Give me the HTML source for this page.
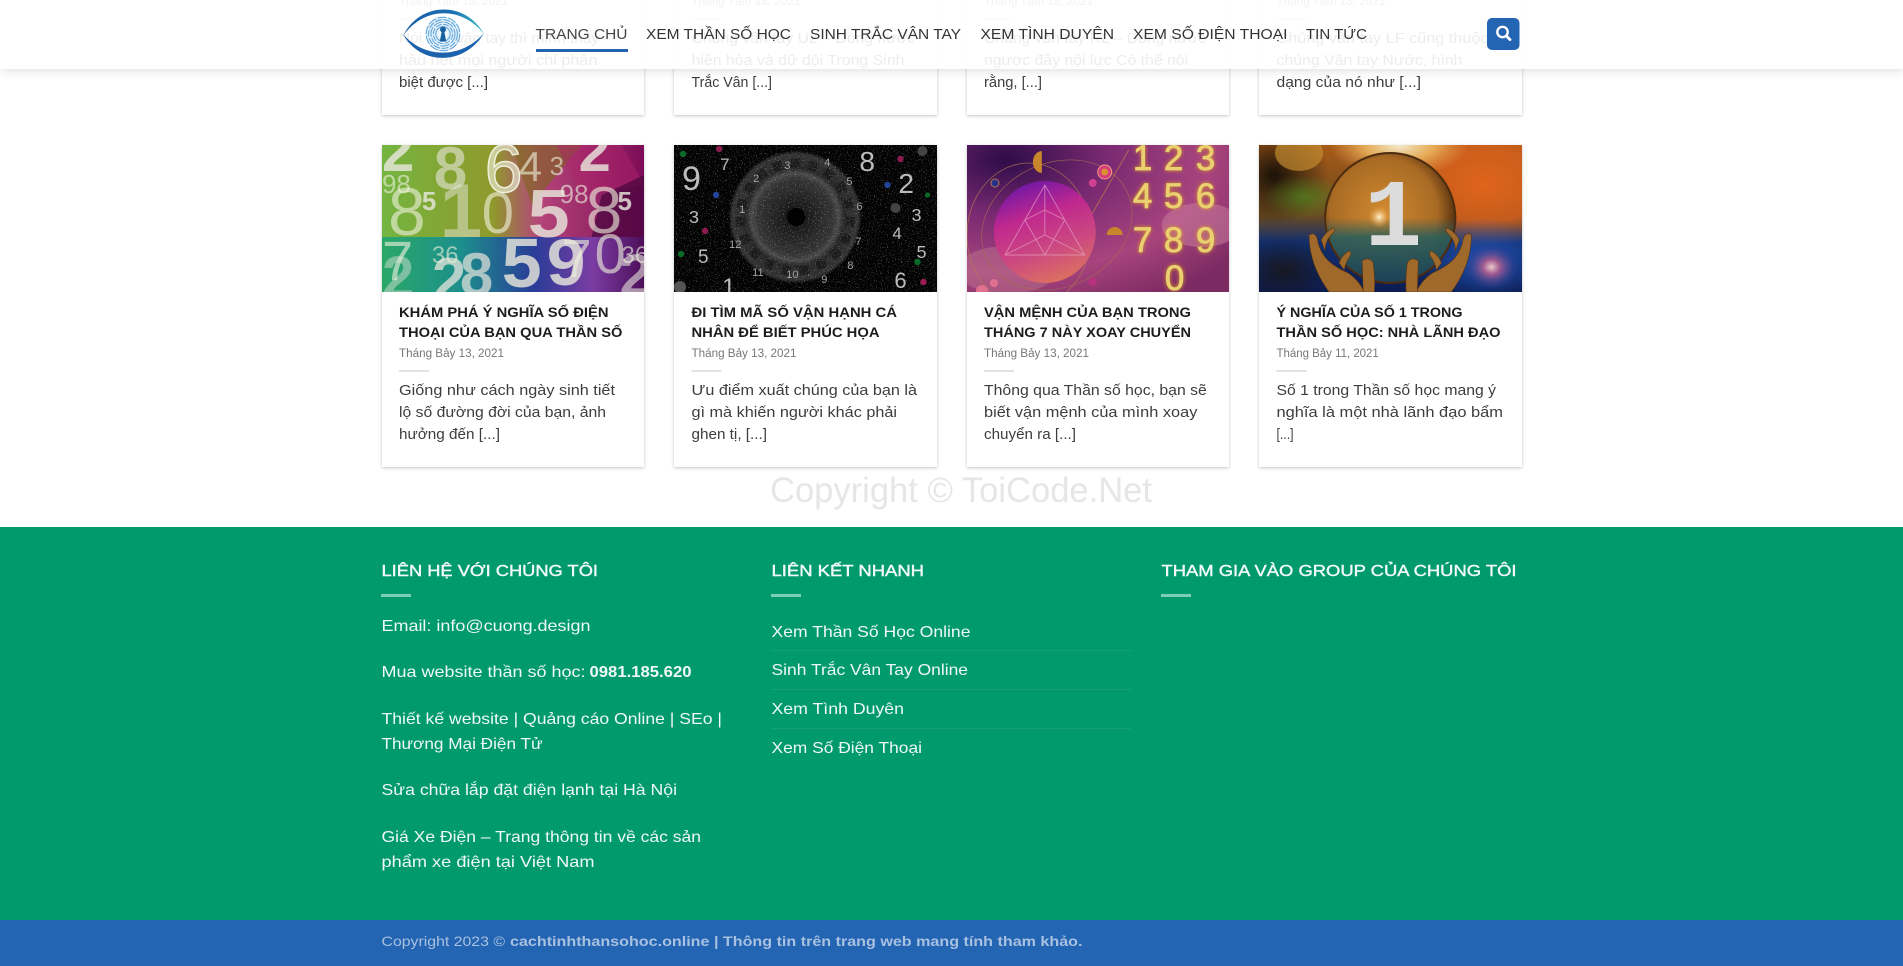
<!DOCTYPE html>
<html lang="vi">
<head>
<meta charset="utf-8">
<title>Cách tính thần số học</title>
<style>
html,body{margin:0;padding:0;background:#fff}
body{width:1903px;height:966px;overflow:hidden;position:relative;font-family:"Liberation Sans","DejaVu Sans",sans-serif}
svg{display:block}
svg text{font-family:"Liberation Sans","DejaVu Sans",sans-serif}
.layer{position:absolute;left:0;top:0}
.card{position:absolute;background:#fff;box-shadow:0 1px 3px rgba(0,0,0,.24)}
.green{position:absolute;left:0;top:527px;width:1903px;height:393px;background:#009a6e}
.blue{position:absolute;left:0;top:920px;width:1903px;height:46px;background:#2364b3}
.hdr{position:absolute;left:0;top:0;width:1903px;height:69px;background:rgba(255,255,255,.9);box-shadow:1px 1px 10px rgba(0,0,0,.15)}
.t{font-size:13.5px;font-weight:700;fill:#1c1c1c}
.d{font-size:11.5px;fill:#777}
.p{font-size:15px;fill:#3d3d3d}
.n{font-size:14.6px;fill:#333}
.ft{font-size:16px;fill:#f2faf7;stroke:#f2faf7;stroke-width:.4px}
.f{font-size:15.6px;fill:#eef8f5}
.c{font-size:14px;fill:#a9c1e0}
.wm{font-size:35px;fill:#e6e6e6}
</style>
</head>
<body>
<div class="card" style="left:382px;width:262px;top:-60px;height:175px"></div>
<div class="card" style="left:674px;width:263px;top:-60px;height:175px"></div>
<div class="card" style="left:967px;width:262px;top:-60px;height:175px"></div>
<div class="card" style="left:1259px;width:263px;top:-60px;height:175px"></div>
<div class="card" style="left:382px;width:262px;top:145px;height:322px"></div>
<div class="card" style="left:674px;width:263px;top:145px;height:322px"></div>
<div class="card" style="left:967px;width:262px;top:145px;height:322px"></div>
<div class="card" style="left:1259px;width:263px;top:145px;height:322px"></div>
<div class="green"></div>
<div class="blue"></div>

<svg class="layer" width="1903" height="966" viewBox="0 0 1903 966">
<defs>
<linearGradient id="a1" x1="0" x2="1" y1="0" y2="0"><stop offset="0" stop-color="#74b540"/><stop offset=".42" stop-color="#8f9a2c"/><stop offset=".6" stop-color="#b4447a"/><stop offset="1" stop-color="#7d0c56"/></linearGradient>
<linearGradient id="a2" x1="0" x2="1" y1="0" y2="0"><stop offset="0" stop-color="#2aa868"/><stop offset=".3" stop-color="#1c8f8c"/><stop offset=".58" stop-color="#2a3c98"/><stop offset=".8" stop-color="#7b3da3"/><stop offset="1" stop-color="#4c0e58"/></linearGradient>
<radialGradient id="c1"><stop offset="0" stop-color="#050505"/><stop offset=".2" stop-color="#1c1c1c"/><stop offset=".58" stop-color="#343434"/><stop offset=".66" stop-color="#4a4a4a"/><stop offset=".74" stop-color="#262626"/><stop offset=".95" stop-color="#333"/><stop offset="1" stop-color="#0a0a0a"/></radialGradient>
<radialGradient id="b3" cx=".15" cy=".1" r="1.1"><stop offset="0" stop-color="#2e0c48"/><stop offset=".35" stop-color="#7a2a72"/><stop offset=".7" stop-color="#a8447e"/><stop offset="1" stop-color="#7c2a62"/></radialGradient>
<linearGradient id="o3" x1=".25" x2=".6" y1="0" y2="1"><stop offset="0" stop-color="#6a16a8"/><stop offset=".35" stop-color="#c0288e"/><stop offset=".7" stop-color="#cc4a80"/><stop offset="1" stop-color="#dc7060"/></linearGradient>
<linearGradient id="b4" x1="0" x2="0" y1="0" y2="1"><stop offset="0" stop-color="#a85a18"/><stop offset=".48" stop-color="#6a4a20"/><stop offset=".66" stop-color="#123070"/><stop offset="1" stop-color="#0c1c50"/></linearGradient>
<radialGradient id="g4a"><stop offset="0" stop-color="#f4ecd0"/><stop offset=".5" stop-color="#eeb860" stop-opacity=".85"/><stop offset="1" stop-color="#e8a050" stop-opacity="0"/></radialGradient>
<radialGradient id="g4b"><stop offset="0" stop-color="#e0641c"/><stop offset=".6" stop-color="#d4601c" stop-opacity=".85"/><stop offset="1" stop-color="#d8601c" stop-opacity="0"/></radialGradient>
<radialGradient id="g4c"><stop offset="0" stop-color="#4f8a20" stop-opacity=".7"/><stop offset="1" stop-color="#4f8a20" stop-opacity="0"/></radialGradient>
<radialGradient id="g4d"><stop offset="0" stop-color="#ecc8c8"/><stop offset=".3" stop-color="#a05a90"/><stop offset="1" stop-color="#1c3a90" stop-opacity="0"/></radialGradient>
<radialGradient id="g4e"><stop offset="0" stop-color="#1a1208"/><stop offset="1" stop-color="#1a1208" stop-opacity="0"/></radialGradient>
<radialGradient id="g4f"><stop offset="0" stop-color="#1f4fb0"/><stop offset="1" stop-color="#1f4fb0" stop-opacity="0"/></radialGradient>
<radialGradient id="s4" cx=".45" cy=".45" r=".55"><stop offset="0" stop-color="#d08a30"/><stop offset=".75" stop-color="#a86a24"/><stop offset="1" stop-color="#5a3210"/></radialGradient>
<linearGradient id="s4b" x1="0" x2="0" y1="0" y2="1"><stop offset="0" stop-color="#2a5f5c" stop-opacity="0"/><stop offset=".3" stop-color="#2a5f5c" stop-opacity=".9"/><stop offset="1" stop-color="#1c4258"/></linearGradient>
<radialGradient id="st"><stop offset="0" stop-color="#fff4d0"/><stop offset="1" stop-color="#f0a040" stop-opacity="0"/></radialGradient>
<linearGradient id="e1" x1="0" x2="1"><stop offset="0" stop-color="#1b5fa8"/><stop offset=".6" stop-color="#1a6cb0"/><stop offset="1" stop-color="#3fc0c8"/></linearGradient>
<filter id="dust" x="0" y="0" width="1" height="1"><feTurbulence type="fractalNoise" baseFrequency=".85" numOctaves="2" seed="4"/><feColorMatrix values="0 0 0 0 .8 0 0 0 0 .8 0 0 0 0 .8 8 0 0 0 -5"/></filter>
</defs>

<!-- Top row of cards -->
<g>
<text class="d" x="399" y="5" textLength="109" lengthAdjust="spacingAndGlyphs">Tháng Tám 18, 2021</text>
<rect x="399" y="18" width="30" height="2" fill="#e2e2e2"/>
<text class="p" x="399" y="43" textLength="200" lengthAdjust="spacingAndGlyphs">Nói đến vân tay thì mình thấy</text>
<text class="p" x="399" y="65" textLength="198.5" lengthAdjust="spacingAndGlyphs">hầu hết mọi người chỉ phân</text>
<text class="p" x="399" y="87" textLength="89" lengthAdjust="spacingAndGlyphs">biệt được [...]</text>

<text class="d" x="691.5" y="5" textLength="109" lengthAdjust="spacingAndGlyphs">Tháng Tám 18, 2021</text>
<rect x="691.5" y="18" width="30" height="2" fill="#e2e2e2"/>
<text class="p" x="691.5" y="43" textLength="223.5" lengthAdjust="spacingAndGlyphs">Chủng vân tay U2 – Dòng nước</text>
<text class="p" x="691.5" y="65" textLength="213" lengthAdjust="spacingAndGlyphs">hiền hòa và dữ dội Trong Sinh</text>
<text class="p" x="691.5" y="87" textLength="80.5" lengthAdjust="spacingAndGlyphs">Trắc Vân [...]</text>

<text class="d" x="984" y="5" textLength="109" lengthAdjust="spacingAndGlyphs">Tháng Tám 18, 2021</text>
<rect x="984" y="18" width="30" height="2" fill="#e2e2e2"/>
<text class="p" x="984" y="43" textLength="222" lengthAdjust="spacingAndGlyphs">Chủng vân tay RL – Dòng nước</text>
<text class="p" x="984" y="65" textLength="204" lengthAdjust="spacingAndGlyphs">ngược đầy nội lực Có thể nói</text>
<text class="p" x="984" y="87" textLength="58" lengthAdjust="spacingAndGlyphs">rằng, [...]</text>

<text class="d" x="1276.5" y="5" textLength="109" lengthAdjust="spacingAndGlyphs">Tháng Tám 18, 2021</text>
<rect x="1276.5" y="18" width="30" height="2" fill="#e2e2e2"/>
<text class="p" x="1276.5" y="43" textLength="212" lengthAdjust="spacingAndGlyphs">Chủng vân tay LF cũng thuộc</text>
<text class="p" x="1276.5" y="65" textLength="186" lengthAdjust="spacingAndGlyphs">chủng Vân tay Nước, hình</text>
<text class="p" x="1276.5" y="87" textLength="144.5" lengthAdjust="spacingAndGlyphs">dạng của nó như [...]</text>
</g>

<!-- Image 1 -->
<svg x="382" y="145" width="262" height="147" viewBox="0 0 262.5 147" preserveAspectRatio="none">
<rect width="263" height="92" fill="url(#a1)"/>
<rect y="92" width="263" height="55" fill="url(#a2)"/>
<polygon points="130,0 200,0 150,60" fill="#7a6a14" opacity=".55"/>
<polygon points="175,0 240,0 263,40 200,50" fill="#b0246c" opacity=".45"/>
<polygon points="220,50 263,30 263,92 210,92" fill="#3c0438" opacity=".6"/>
<g fill="#e8e6dc" fill-opacity=".82" font-weight="700">
<text x="0" y="26" font-size="58">2</text>
<text x="197" y="26" font-size="58">2</text>
<text x="52" y="44" font-size="60" fill-opacity=".6">8</text>
<text x="146" y="92" font-size="68" textLength="42" lengthAdjust="spacingAndGlyphs">5</text>
<text x="120" y="142" font-size="70" textLength="40" lengthAdjust="spacingAndGlyphs">5</text>
<text x="165" y="140" font-size="66" textLength="39" lengthAdjust="spacingAndGlyphs">9</text>
<text x="40" y="65" font-size="26">5</text>
<text x="236" y="65" font-size="26">5</text>
<text x="50" y="156" font-size="62" fill-opacity=".75">2</text>
<text x="78" y="150" font-size="60" fill-opacity=".7">8</text>
<text x="0" y="152" font-size="58" fill-opacity=".45">2</text>
<text x="238" y="150" font-size="58" fill-opacity=".6">2</text>
<text x="58" y="92" font-size="76" fill-opacity=".5">1</text>
</g>
<g fill="#eef0dc" fill-opacity=".62">
<text x="103" y="47" font-size="68" stroke="#eef0dc" stroke-width="1.5">6</text>
<text x="137" y="36" font-size="42">4</text>
<text x="168" y="30" font-size="26">3</text>
<text x="6" y="90" font-size="68">8</text>
<text x="204" y="88" font-size="66">8</text>
<text x="100" y="88" font-size="58">0</text>
<text x="213" y="128" font-size="56">0</text>
<text x="50" y="118" font-size="24">36</text>
<text x="240" y="118" font-size="24">36</text>
<text x="0" y="135" font-size="56">7</text>
<text x="180" y="132" font-size="54">7</text>
<text x="178" y="58" font-size="26">98</text>
<text x="0" y="48" font-size="26">98</text>
</g>
</svg>

<!-- Image 2 -->
<svg x="674" y="145" width="263" height="147" viewBox="0 0 262.5 147" preserveAspectRatio="none">
<rect width="263" height="147" fill="#030303"/>
<ellipse cx="121" cy="72" rx="66" ry="66" fill="url(#c1)"/>
<ellipse cx="121" cy="72" rx="55" ry="54" fill="none" stroke="#151515" stroke-width="9" stroke-dasharray="9 9" opacity=".7"/>
<rect width="263" height="147" filter="url(#dust)" opacity=".4"/>
<circle cx="122" cy="72" r="9" fill="#020202"/>
<g fill="#a6a6a6" font-size="11">
<text x="110" y="24">3</text><text x="150" y="21">4</text><text x="172" y="40">5</text><text x="182" y="65">6</text><text x="181" y="100">7</text><text x="173" y="124">8</text><text x="147" y="138">9</text><text x="112" y="133">10</text><text x="78" y="131">11</text><text x="55" y="103">12</text><text x="65" y="68">1</text><text x="79" y="37">2</text>
</g>
<g fill="#bcbcbc">
<text x="8" y="45" font-size="34">9</text>
<text x="185" y="26" font-size="28">8</text>
<text x="224" y="48" font-size="28">2</text>
<text x="15" y="78" font-size="18">3</text>
<text x="237" y="76" font-size="18">3</text>
<text x="218" y="94" font-size="17">4</text>
<text x="24" y="118" font-size="19">5</text>
<text x="242" y="113" font-size="18">5</text>
<text x="220" y="143" font-size="22">6</text>
<text x="46" y="25" font-size="17">7</text>
<text x="48" y="150" font-size="24">1</text>
</g>
<g>
<circle cx="9" cy="9" r="3.2" fill="#0a6a28"/><circle cx="45" cy="4" r="3.2" fill="#8a1c50"/><circle cx="226" cy="14" r="3.2" fill="#8a1c50"/><circle cx="213" cy="40" r="3.2" fill="#24449a"/><circle cx="253" cy="50" r="2.6" fill="#0a6a28"/><circle cx="42" cy="50" r="3.2" fill="#24449a"/><circle cx="31" cy="86" r="3.2" fill="#8a1c50"/><circle cx="7" cy="109" r="3.2" fill="#0a6a28"/><circle cx="243" cy="117" r="3.2" fill="#0a6a28"/><circle cx="249" cy="137" r="3.2" fill="#9a1c54"/><circle cx="221" cy="63" r="5" fill="#444"/><circle cx="248" cy="6" r="5" fill="#444"/><circle cx="6" cy="142" r="6" fill="#555"/>
</g>
</svg>

<!-- Image 3 -->
<svg x="967" y="145" width="262" height="147" viewBox="0 0 262.5 147" preserveAspectRatio="none">
<rect width="263" height="147" fill="url(#b3)"/>
<ellipse cx="235" cy="80" rx="40" ry="22" fill="#c87c9c" opacity=".55"/>
<ellipse cx="40" cy="125" rx="50" ry="24" fill="#c08090" opacity=".4"/>
<ellipse cx="62" cy="90" rx="62" ry="72" fill="none" stroke="#b07a50" stroke-width=".8" opacity=".8"/>
<ellipse cx="90" cy="80" rx="78" ry="62" fill="none" stroke="#a86a50" stroke-width=".8" opacity=".8" transform="rotate(-25 90 80)"/>
<line x1="90" y1="130" x2="162" y2="5" stroke="#b87050" stroke-width=".8"/>
<circle cx="78" cy="87" r="51" fill="url(#o3)"/>
<g fill="none" stroke="#e8a8cc" stroke-width=".9" opacity=".65">
<polygon points="78,40 38,110 118,110"/>
<polyline points="78,40 78,90 38,110"/><polyline points="78,90 118,110"/><polyline points="58,75 78,65 98,75 78,110 58,75"/>
</g>
<path d="M75 6a9 11 0 0 0 0 22z" fill="#c8862c"/>
<circle cx="138" cy="27" r="7" fill="#d83a80" stroke="#e8a080"/><circle cx="138" cy="27" r="3.5" fill="#d89030"/>
<circle cx="126" cy="38" r="4" fill="#d04090"/>
<circle cx="28" cy="38" r="4" fill="#28308a" stroke="#b07a50"/>
<path d="M140 90a8 8 0 0 1 16 0z" fill="#c8862c"/>
<circle cx="27" cy="138" r="4" fill="#e07090"/><circle cx="15" cy="146" r="6" fill="#e07090"/>
<circle cx="126" cy="137" r="4" fill="#b83080"/>
<g font-size="35" fill="#ead070" stroke="#ead070" stroke-width=".7" style="filter:drop-shadow(0 0 2px #e0a020)" text-anchor="middle">
<text x="176" y="25">1</text><text x="207" y="25">2</text><text x="239" y="25">3</text>
<text x="176" y="63">4</text><text x="207" y="63">5</text><text x="239" y="63">6</text>
<text x="176" y="107">7</text><text x="207" y="107">8</text><text x="239" y="107">9</text>
<text x="208" y="145">0</text>
</g>
</svg>

<!-- Image 4 -->
<svg x="1259" y="145" width="263" height="147" viewBox="0 0 262.5 147" preserveAspectRatio="none">
<rect width="263" height="147" fill="url(#b4)"/>
<ellipse cx="15" cy="30" rx="55" ry="50" fill="url(#g4e)"/>
<ellipse cx="225" cy="40" rx="95" ry="62" fill="url(#g4b)"/>
<ellipse cx="140" cy="0" rx="70" ry="32" fill="url(#g4a)"/>
<ellipse cx="45" cy="52" rx="40" ry="22" fill="url(#g4c)"/>
<ellipse cx="40" cy="8" rx="24" ry="18" fill="#c08a30" opacity=".7"/>
<ellipse cx="225" cy="115" rx="70" ry="42" fill="url(#g4f)"/>
<ellipse cx="232" cy="122" rx="28" ry="24" fill="url(#g4d)"/>
<ellipse cx="25" cy="125" rx="50" ry="35" fill="url(#g4e)" opacity=".7"/>
<circle cx="131" cy="73" r="65" fill="url(#s4)"/>
<path d="M67 73h128a64 64 0 0 1-128 0z" fill="url(#s4b)"/>
<circle cx="131" cy="73" r="65" fill="none" stroke="#4c2c10" stroke-width="2"/>
<text x="134" y="100" font-size="96" font-weight="700" fill="#dcdcdc" text-anchor="middle" style="font-family:'Liberation Mono',monospace">1</text>
<circle cx="120" cy="72" r="11" fill="url(#st)"/>
<g fill="#a0692c" stroke="#5a3410" stroke-width=".6">
<path d="M50 90c5-3 8 0 9 8 4 14 12 22 30 30 6 4 12 10 16 19H70C56 128 50 108 50 90z"/>
<path d="M212 90c-5-3-8 0-9 8-4 14-12 22-30 30-6 4-12 10-16 19h35c14-19 20-39 20-57z"/>
<path d="M62 95c3-6 8-10 12-12 2 0 2 3 0 5-6 6-8 10-8 18z"/>
<path d="M200 95c-3-6-8-10-12-12-2 0-2 3 0 5 6 6 8 10 8 18z"/>
<path d="M80 118c2-6 6-10 10-12 2 0 2 3 1 5-3 4-5 8-6 14z"/>
<path d="M182 118c-2-6-6-10-10-12-2 0-2 3-1 5 3 4 5 8 6 14z"/>
<path d="M103 116c3-3 9-3 11 2 1 8 2 20 1 29H104z"/>
<path d="M159 116c-3-3-9-3-11 2-1 8-2 20-1 29h11z"/>
</g>
</svg>

<!-- Lower row of cards -->
<g>
<text class="t" x="399" y="317" textLength="209.5" lengthAdjust="spacingAndGlyphs">KHÁM PHÁ Ý NGHĨA SỐ ĐIỆN</text>
<text class="t" x="399" y="337" textLength="223.5" lengthAdjust="spacingAndGlyphs">THOẠI CỦA BẠN QUA THẦN SỐ</text>
<text class="d" x="399" y="357" textLength="105" lengthAdjust="spacingAndGlyphs">Tháng Bảy 13, 2021</text>
<rect x="399" y="370" width="30" height="2" fill="#e2e2e2"/>
<text class="p" x="399" y="395" textLength="216" lengthAdjust="spacingAndGlyphs">Giống như cách ngày sinh tiết</text>
<text class="p" x="399" y="417" textLength="207" lengthAdjust="spacingAndGlyphs">lộ số đường đời của bạn, ảnh</text>
<text class="p" x="399" y="439" textLength="101" lengthAdjust="spacingAndGlyphs">hưởng đến [...]</text>

<text class="t" x="691.5" y="317" textLength="205.5" lengthAdjust="spacingAndGlyphs">ĐI TÌM MÃ SỐ VẬN HẠNH CÁ</text>
<text class="t" x="691.5" y="337" textLength="188" lengthAdjust="spacingAndGlyphs">NHÂN ĐỂ BIẾT PHÚC HỌA</text>
<text class="d" x="691.5" y="357" textLength="105" lengthAdjust="spacingAndGlyphs">Tháng Bảy 13, 2021</text>
<rect x="691.5" y="370" width="30" height="2" fill="#e2e2e2"/>
<text class="p" x="691.5" y="395" textLength="225.5" lengthAdjust="spacingAndGlyphs">Ưu điểm xuất chúng của bạn là</text>
<text class="p" x="691.5" y="417" textLength="205.5" lengthAdjust="spacingAndGlyphs">gì mà khiến người khác phải</text>
<text class="p" x="691.5" y="439" textLength="75.5" lengthAdjust="spacingAndGlyphs">ghen tị, [...]</text>

<text class="t" x="984" y="317" textLength="207" lengthAdjust="spacingAndGlyphs">VẬN MỆNH CỦA BẠN TRONG</text>
<text class="t" x="984" y="337" textLength="207" lengthAdjust="spacingAndGlyphs">THÁNG 7 NÀY XOAY CHUYỂN</text>
<text class="d" x="984" y="357" textLength="105" lengthAdjust="spacingAndGlyphs">Tháng Bảy 13, 2021</text>
<rect x="984" y="370" width="30" height="2" fill="#e2e2e2"/>
<text class="p" x="984" y="395" textLength="222.8" lengthAdjust="spacingAndGlyphs">Thông qua Thần số học, bạn sẽ</text>
<text class="p" x="984" y="417" textLength="213.4" lengthAdjust="spacingAndGlyphs">biết vận mệnh của mình xoay</text>
<text class="p" x="984" y="439" textLength="92" lengthAdjust="spacingAndGlyphs">chuyển ra [...]</text>

<text class="t" x="1276.5" y="317" textLength="186" lengthAdjust="spacingAndGlyphs">Ý NGHĨA CỦA SỐ 1 TRONG</text>
<text class="t" x="1276.5" y="337" textLength="224" lengthAdjust="spacingAndGlyphs">THẦN SỐ HỌC: NHÀ LÃNH ĐẠO</text>
<text class="d" x="1276.5" y="357" textLength="102.3" lengthAdjust="spacingAndGlyphs">Tháng Bảy 11, 2021</text>
<rect x="1276.5" y="370" width="30" height="2" fill="#e2e2e2"/>
<text class="p" x="1276.5" y="395" textLength="219.5" lengthAdjust="spacingAndGlyphs">Số 1 trong Thần số học mang ý</text>
<text class="p" x="1276.5" y="417" textLength="226.5" lengthAdjust="spacingAndGlyphs">nghĩa là một nhà lãnh đạo bẩm</text>
<text class="p" x="1276.5" y="439" textLength="17" lengthAdjust="spacingAndGlyphs">[...]</text>
</g>

<text class="wm" x="770" y="502" textLength="382" lengthAdjust="spacingAndGlyphs">Copyright © ToiCode.Net</text>

<!-- Footer -->
<g>
<text class="ft" x="381.5" y="576" textLength="216.5" lengthAdjust="spacingAndGlyphs">LIÊN HỆ VỚI CHÚNG TÔI</text>
<text class="ft" x="771.5" y="576" textLength="152.5" lengthAdjust="spacingAndGlyphs">LIÊN KẾT NHANH</text>
<text class="ft" x="1161.5" y="576" textLength="355" lengthAdjust="spacingAndGlyphs">THAM GIA VÀO GROUP CỦA CHÚNG TÔI</text>
<rect x="381" y="594" width="30" height="3" fill="#fff" fill-opacity=".5"/>
<rect x="771" y="594" width="30" height="3" fill="#fff" fill-opacity=".5"/>
<rect x="1161" y="594" width="30" height="3" fill="#fff" fill-opacity=".5"/>

<text class="f" x="381.5" y="631" textLength="209" lengthAdjust="spacingAndGlyphs">Email: info@cuong.design</text>
<text class="f" x="381.5" y="677" textLength="204" lengthAdjust="spacingAndGlyphs">Mua website thần số học:</text>
<text class="f" x="589.5" y="677" textLength="102" lengthAdjust="spacingAndGlyphs" style="font-weight:700">0981.185.620</text>
<text class="f" x="381.5" y="724" textLength="340.5" lengthAdjust="spacingAndGlyphs">Thiết kế website | Quảng cáo Online | SEo |</text>
<text class="f" x="381.5" y="749" textLength="161" lengthAdjust="spacingAndGlyphs">Thương Mại Điện Tử</text>
<text class="f" x="381.5" y="795" textLength="295.5" lengthAdjust="spacingAndGlyphs">Sửa chữa lắp đặt điện lạnh tại Hà Nội</text>
<text class="f" x="381.5" y="842" textLength="319.5" lengthAdjust="spacingAndGlyphs">Giá Xe Điện – Trang thông tin về các sản</text>
<text class="f" x="381.5" y="867" textLength="213" lengthAdjust="spacingAndGlyphs">phẩm xe điện tại Việt Nam</text>

<text class="f" x="771.5" y="637" textLength="199" lengthAdjust="spacingAndGlyphs">Xem Thần Số Học Online</text>
<rect x="771" y="650" width="360" height="1" fill="#fff" fill-opacity=".08"/>
<text class="f" x="771.5" y="675" textLength="196.5" lengthAdjust="spacingAndGlyphs">Sinh Trắc Vân Tay Online</text>
<rect x="771" y="689" width="360" height="1" fill="#fff" fill-opacity=".08"/>
<text class="f" x="771.5" y="714" textLength="132.5" lengthAdjust="spacingAndGlyphs">Xem Tình Duyên</text>
<rect x="771" y="728" width="360" height="1" fill="#fff" fill-opacity=".08"/>
<text class="f" x="771.5" y="753" textLength="150.5" lengthAdjust="spacingAndGlyphs">Xem Số Điện Thoại</text>

<text class="c" x="381.5" y="946" textLength="123.5" lengthAdjust="spacingAndGlyphs">Copyright 2023 ©</text>
<text class="c" x="510" y="946" textLength="572.5" lengthAdjust="spacingAndGlyphs" style="font-weight:700">cachtinhthansohoc.online | Thông tin trên trang web mang tính tham khảo.</text>
</g>
</svg>

<div class="hdr"></div>

<svg class="layer" width="1903" height="69" viewBox="0 0 1903 69">
<!-- Logo -->
<g>
<path d="M403 36C420 1 466 1 484 34 462 6 424 6 403 36Z" fill="url(#e1)"/>
<path d="M403 34C420 66 465 66 484 33 462 59 424 59 403 34Z" fill="#1b62ad"/>
<circle cx="443" cy="34" r="17.5" fill="#e4f0f9"/>
<g fill="none" stroke="#5aa4dc" stroke-width="1">
<circle cx="443" cy="34" r="16.8" stroke-dasharray="9 1.5"/>
<circle cx="443" cy="34" r="14.4" stroke-dasharray="7 1.5"/>
<circle cx="443" cy="34" r="12" stroke-dasharray="10 1.5"/>
<circle cx="443" cy="34" r="9.6" stroke-dasharray="6 1.5"/>
<circle cx="443" cy="34" r="7.2"/>
</g>
<circle cx="443" cy="33" r="5.5" fill="#eff6fb"/>
<path d="M443 26.5a3 3 0 0 1 1.4 5.6l1.8 9.4h-6.4l1.8-9.4a3 3 0 0 1 1.4-5.6z" fill="#17609f"/>
</g>
<!-- Nav -->
<text class="n" x="535.5" y="39" textLength="92" lengthAdjust="spacingAndGlyphs" style="fill:#444">TRANG CHỦ</text>
<rect x="536" y="49" width="92" height="3" fill="#2563b0"/>
<text class="n" x="646" y="39" textLength="145" lengthAdjust="spacingAndGlyphs">XEM THẦN SỐ HỌC</text>
<text class="n" x="810" y="39" textLength="151" lengthAdjust="spacingAndGlyphs">SINH TRẮC VÂN TAY</text>
<text class="n" x="980.5" y="39" textLength="133.5" lengthAdjust="spacingAndGlyphs">XEM TÌNH DUYÊN</text>
<text class="n" x="1133" y="39" textLength="154.5" lengthAdjust="spacingAndGlyphs">XEM SỐ ĐIỆN THOẠI</text>
<text class="n" x="1306" y="39" textLength="61" lengthAdjust="spacingAndGlyphs">TIN TỨC</text>
<!-- Search -->
<rect x="1487" y="18" width="32.5" height="32" rx="5" fill="#2364b3"/>
<circle cx="1502.5" cy="32" r="5.2" fill="none" stroke="#fff" stroke-width="2.4"/>
<line x1="1506.4" y1="36" x2="1510" y2="39.6" stroke="#fff" stroke-width="2.8" stroke-linecap="round"/>
</svg>
</body>
</html>
